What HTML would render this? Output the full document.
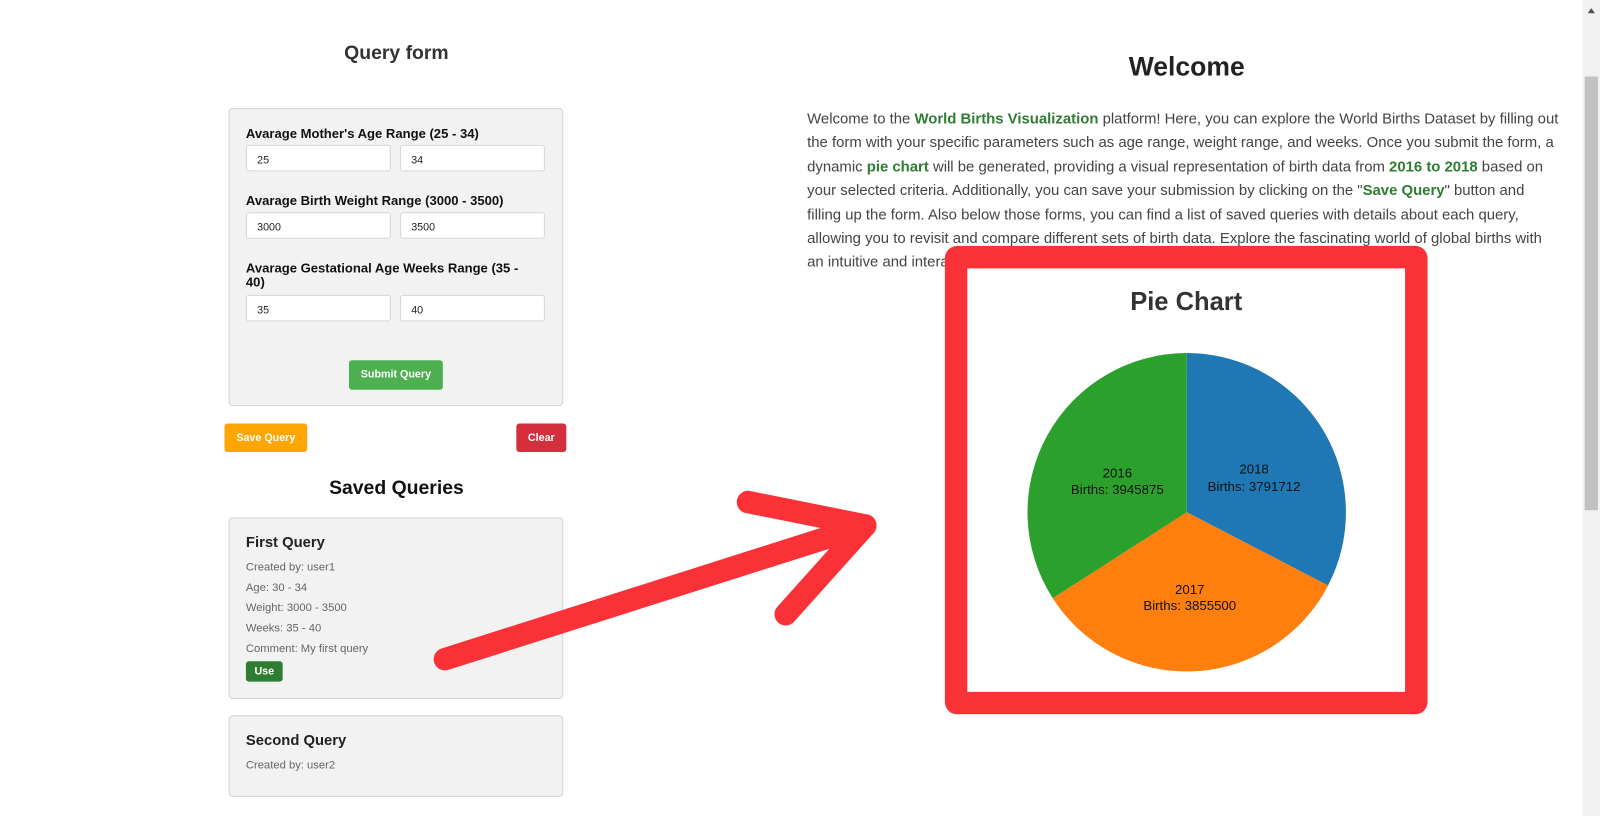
<!DOCTYPE html>
<html><head><meta charset="utf-8"><style>
*{box-sizing:border-box;margin:0;padding:0}
body{width:1600px;height:766px;overflow:hidden;background:#fff;font-family:"Liberation Sans",Arial,sans-serif;color:#333;position:relative}
#w{position:absolute;left:0;top:0;width:1568px;height:800px;transform:scale(1.0204);transform-origin:0 0}
.a{position:absolute}
.box{position:absolute;background:#f2f2f2;border:1px solid #d4d4d4;border-radius:4px}
.lbl{position:absolute;left:16px;font-size:12.8px;font-weight:bold;color:#111;width:278px;line-height:14px}
.inp{position:absolute;width:142px;height:26px;background:#fff;border:1px solid #d6d6d6;border-radius:3px;font-size:10.5px;padding:8px 0 0 10px;color:#222}
.btn{position:absolute;color:#fff;font-size:10.5px;font-weight:bold;text-align:center;border-radius:3px}
.q{position:absolute;left:16px;font-size:11px;color:#666}
p.w{position:absolute;left:791px;top:106px;width:740px;font-size:14.6px;line-height:23.4px;color:#444}
p.w b{color:#2e7d32}
</style></head><body><div id="w">
<div class="a" style="left:226px;top:42px;width:325px;text-align:center;font-size:19px;font-weight:bold">Query form</div>
<div class="box" style="left:224px;top:106px;width:328px;height:292px">
<div class="lbl" style="top:17px">Avarage Mother's Age Range (25 - 34)</div>
<div class="inp" style="left:16px;top:35px">25</div><div class="inp" style="left:167px;top:35px">34</div>
<div class="lbl" style="top:83px">Avarage Birth Weight Range (3000 - 3500)</div>
<div class="inp" style="left:16px;top:101px">3000</div><div class="inp" style="left:167px;top:101px">3500</div>
<div class="lbl" style="top:149px">Avarage Gestational Age Weeks Range (35 - 40)</div>
<div class="inp" style="left:16px;top:182px">35</div><div class="inp" style="left:167px;top:182px">40</div>
<div class="btn" style="left:117px;top:246px;width:92px;height:29px;line-height:29px;background:#4caf50">Submit Query</div>
</div>
<div class="btn" style="left:220px;top:415px;width:81px;height:28px;line-height:28px;background:#ffa500">Save Query</div>
<div class="btn" style="left:506px;top:415px;width:49px;height:28px;line-height:28px;background:#d32f3c">Clear</div>
<div class="a" style="left:226px;top:468px;width:325px;text-align:center;font-size:19px;font-weight:bold;color:#111">Saved Queries</div>
<div class="box" style="left:224px;top:507px;width:328px;height:178px">
<div class="a" style="left:16px;top:16px;font-size:14.5px;font-weight:bold;color:#222">First Query</div>
<div class="q" style="top:42px">Created by: user1</div>
<div class="q" style="top:62px">Age: 30 - 34</div>
<div class="q" style="top:82px">Weight: 3000 - 3500</div>
<div class="q" style="top:102px">Weeks: 35 - 40</div>
<div class="q" style="top:122px">Comment: My first query</div>
<div class="btn" style="left:16px;top:140px;width:36px;height:20px;line-height:20px;background:#2e7d32;font-size:10.5px">Use</div>
</div>
<div class="box" style="left:224px;top:701px;width:328px;height:80px">
<div class="a" style="left:16px;top:16px;font-size:14.5px;font-weight:bold;color:#222">Second Query</div>
<div class="q" style="top:42px">Created by: user2</div>
</div>
<div class="a" style="left:791px;top:50px;width:744px;text-align:center;font-size:26px;font-weight:bold;color:#222">Welcome</div>
<p class="w">Welcome to the <b>World Births Visualization</b> platform! Here, you can explore the World Births Dataset by filling out the form with your specific parameters such as age range, weight range, and weeks. Once you submit the form, a dynamic <b>pie chart</b> will be generated, providing a visual representation of birth data from <b>2016 to 2018</b> based on your selected criteria. Additionally, you can save your submission by clicking on the "<b>Save Query</b>" button and filling up the form. Also below those forms, you can find a list of saved queries with details about each query, allowing you to revisit and compare different sets of birth data. Explore the fascinating world of global births with an intuitive and interactive experience.</p>
<div class="a" style="left:926px;top:241px;width:473px;height:459px;background:#fff;border:22px solid #fa3237;border-radius:12px"></div>
<div class="a" style="left:948px;top:282px;width:429px;text-align:center;font-size:25px;font-weight:bold;color:#333">Pie Chart</div>
<svg class="a" style="left:0;top:0" width="1568" height="800">
<path d="M1163 502 L1163 346 A156 156 0 0 1 1301.5 573.8 Z" fill="#1f77b4"/>
<path d="M1163 502 L1301.5 573.8 A156 156 0 0 1 1031.7 586.3 Z" fill="#ff7f0e"/>
<path d="M1163 502 L1031.7 586.3 A156 156 0 0 1 1163 346 Z" fill="#2ca02c"/>
<g font-family="Liberation Sans,Arial,sans-serif" font-size="13" fill="#111" text-anchor="middle">
<text x="1229" y="464">2018</text><text x="1229" y="481">Births: 3791712</text>
<text x="1095" y="468">2016</text><text x="1095" y="484">Births: 3945875</text>
<text x="1166" y="582">2017</text><text x="1166" y="598">Births: 3855500</text>
</g>
<g stroke="#fa3237" stroke-width="22" stroke-linecap="round" stroke-linejoin="round" fill="none">
<path d="M436 646 L848 515"/><path d="M733 492 L848 515 L770 602"/>
</g>
<rect x="1551" y="0" width="17" height="800" fill="#f1f1f1"/>
<rect x="1553" y="75" width="13" height="425" fill="#c1c1c1"/>
<path d="M1556 13 L1559.5 8 L1563 13 Z" fill="#505050"/>
</svg>
</div></body></html>
